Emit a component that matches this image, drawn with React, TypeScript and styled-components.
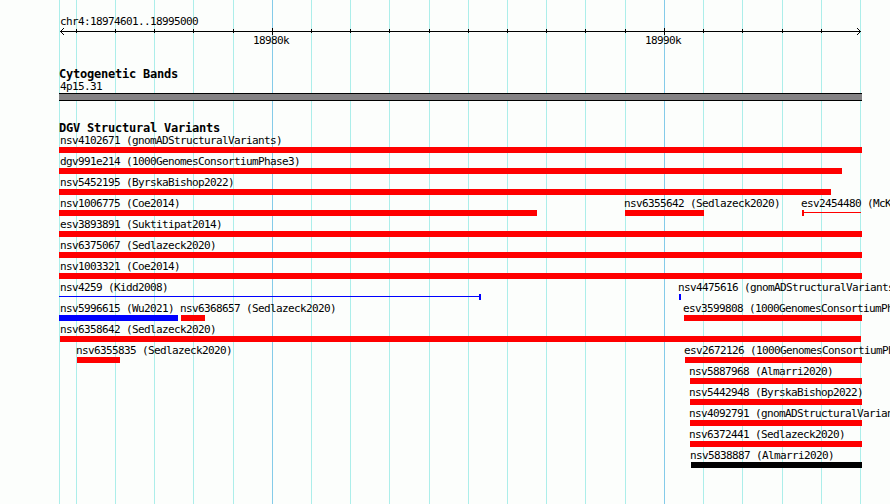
import { type FC } from 'react';
import styled, { createGlobalStyle } from 'styled-components';

type Feature = {
  name: string;
  start: number;
  end: number;
  color?: string;
  // thin line with an end cap instead of a solid bar
  cap?: 'left' | 'right';
};

const ORIGIN = 59;
const RED = '#ff0000';
const BLUE = '#0000ff';

const gridLines = [
  59, 76, 115, 154, 193, 233, 272, 311, 350, 389, 429, 468, 507, 546, 585, 625, 664, 703, 742, 782,
  821, 860,
];
const majorLines = [272, 664];

const tracks: Feature[][] = [
  [{ name: 'nsv4102671 (gnomADStructuralVariants)', start: 59, end: 862 }],
  [{ name: 'dgv991e214 (1000GenomesConsortiumPhase3)', start: 59, end: 842 }],
  [{ name: 'nsv5452195 (ByrskaBishop2022)', start: 59, end: 831 }],
  [
    { name: 'nsv1006775 (Coe2014)', start: 59, end: 537 },
    { name: 'nsv6355642 (Sedlazeck2020)', start: 625, end: 704 },
    { name: 'esv2454480 (McKernan2009)', start: 802, end: 861, cap: 'left' },
  ],
  [{ name: 'esv3893891 (Suktitipat2014)', start: 59, end: 862 }],
  [{ name: 'nsv6375067 (Sedlazeck2020)', start: 59, end: 862 }],
  [{ name: 'nsv1003321 (Coe2014)', start: 59, end: 862 }],
  [
    { name: 'nsv4259 (Kidd2008)', start: 59, end: 481, color: BLUE, cap: 'right' },
    { name: 'nsv4475616 (gnomADStructuralVariants)', start: 679, end: 681, color: BLUE },
  ],
  [
    { name: 'nsv5996615 (Wu2021)', start: 59, end: 178, color: BLUE },
    { name: 'nsv6368657 (Sedlazeck2020)', start: 181, end: 205 },
    { name: 'esv3599808 (1000GenomesConsortiumPhase3)', start: 684, end: 862 },
  ],
  [{ name: 'nsv6358642 (Sedlazeck2020)', start: 60, end: 861 }],
  [
    { name: 'nsv6355835 (Sedlazeck2020)', start: 77, end: 120 },
    { name: 'esv2672126 (1000GenomesConsortiumPhase3)', start: 685, end: 862 },
  ],
  [{ name: 'nsv5887968 (Almarri2020)', start: 690, end: 862 }],
  [{ name: 'nsv5442948 (ByrskaBishop2022)', start: 690, end: 862 }],
  [{ name: 'nsv4092791 (gnomADStructuralVariants)', start: 690, end: 862 }],
  [{ name: 'nsv6372441 (Sedlazeck2020)', start: 690, end: 862 }],
  [{ name: 'nsv5838887 (Almarri2020)', start: 691, end: 862, color: '#000000' }],
];

// labels sit just left of their bar, but never left of the panel edge
const labelShift = (start: number) => Math.max(ORIGIN + 1 - start, -1);

const Axis: FC = () => (
  <AxisSvg width="803" height="7" shapeRendering="crispEdges">
    <rect x="1" y="3" width="801" height="1" />
    {gridLines.slice(1, -1).map((x) => {
      const major = majorLines.includes(x);
      return (
        <rect key={x} x={x - ORIGIN} y={major ? 0 : 1} width="1" height={major ? 7 : 4} />
      );
    })}
    {/* arrow heads, one pixel per step */}
    {[1, 2, 3].map((i) => (
      <g key={i}>
        <rect x={1 + i} y={3 - i} width="1" height="1" />
        <rect x={1 + i} y={3 + i} width="1" height="1" />
        <rect x={801 - i} y={3 - i} width="1" height="1" />
        <rect x={801 - i} y={3 + i} width="1" height="1" />
      </g>
    ))}
  </AxisSvg>
);

const TrackRow: FC<{ features: Feature[] }> = ({ features }) => (
  <Row>
    {features.map((f, i) => {
      const previous = i === 0 ? ORIGIN : features[i - 1].end;
      return (
        <FeatureBox
          key={f.name}
          style={{ marginLeft: f.start - previous, width: f.end - f.start }}
        >
          <Label $shift={labelShift(f.start)}>{f.name}</Label>
          {f.cap ? (
            <Span $color={f.color ?? RED} $cap={f.cap}>
              <SpanLine />
              <SpanCap />
            </Span>
          ) : (
            <Bar $color={f.color ?? RED} />
          )}
        </FeatureBox>
      );
    })}
  </Row>
);

export default function App() {
  return (
    <>
      <GlobalStyle />
      <Panel>
        <GridLayer>
          {gridLines.map((x, i) => (
            <GridLine
              key={x}
              $major={majorLines.includes(x)}
              style={{ marginLeft: i === 0 ? ORIGIN : x - gridLines[i - 1] - 1 }}
            />
          ))}
        </GridLayer>
        <Content>
          <Label $shift={1}>chr4:18974601..18995000</Label>
          <Axis />
          <TickLabels>
            <span>18980k</span>
            <span>18990k</span>
          </TickLabels>
          <Heading>Cytogenetic Bands</Heading>
          <Label $shift={1}>4p15.31</Label>
          <Band />
          <Heading>DGV Structural Variants</Heading>
          {tracks.map((features) => (
            <TrackRow key={features[0].name} features={features} />
          ))}
        </Content>
      </Panel>
    </>
  );
}

const GlobalStyle = createGlobalStyle`
  body {
    margin: 0;
    overflow: hidden;
    background: #fcfefc;
  }
`;

const Panel = styled.div`
  position: relative;
  width: 890px;
  height: 504px;
  overflow: hidden;
  background: #fcfefc;
  color: #000;
  font-family: 'DejaVu Sans Mono', 'Liberation Mono', monospace;
  font-size: 11px;
  letter-spacing: -0.622px;
`;

const GridLayer = styled.div`
  position: absolute;
  inset: 0;
  display: flex;
`;

const GridLine = styled.div<{ $major: boolean }>`
  flex: none;
  width: 1px;
  background: ${(props) => (props.$major ? '#84cbe9' : '#aceeea')};
`;

const Content = styled.div`
  position: relative;
  display: flex;
  flex-direction: column;
  width: 803px;
  padding: 15px 0 0 59px;
`;

const Label = styled.div<{ $shift: number }>`
  height: 13px;
  line-height: 13px;
  text-indent: ${(props) => props.$shift}px;
  white-space: pre;
`;

const AxisSvg = styled.svg`
  display: block;
`;

const TickLabels = styled.div`
  display: flex;
  gap: 356px;
  height: 13px;
  line-height: 11px;
  padding-left: 194px;

  span {
    width: 36px;
  }
`;

const Heading = styled.div`
  height: 13px;
  margin-top: 19px;
  line-height: 14px;
  font-size: 12px;
  font-weight: 700;
  letter-spacing: -0.224px;
  white-space: pre;
`;

const Band = styled.div`
  height: 6px;
  margin-bottom: 1px;
  border: solid #000;
  border-width: 1px 0;
  background: #848284;
`;

const Row = styled.div`
  display: flex;
  height: 21px;
`;

const FeatureBox = styled.div`
  flex: none;
`;

const Bar = styled.div<{ $color: string }>`
  height: 6px;
  background: ${(props) => props.$color};
`;

const SpanLine = styled.div`
  flex: 1;
  height: 1px;
  margin-top: 2px;
  background: currentColor;
`;

const SpanCap = styled.div`
  width: 2px;
  height: 6px;
  background: currentColor;
`;

const Span = styled.div<{ $color: string; $cap: 'left' | 'right' }>`
  display: flex;
  flex-direction: ${(props) => (props.$cap === 'left' ? 'row-reverse' : 'row')};
  color: ${(props) => props.$color};
`;
